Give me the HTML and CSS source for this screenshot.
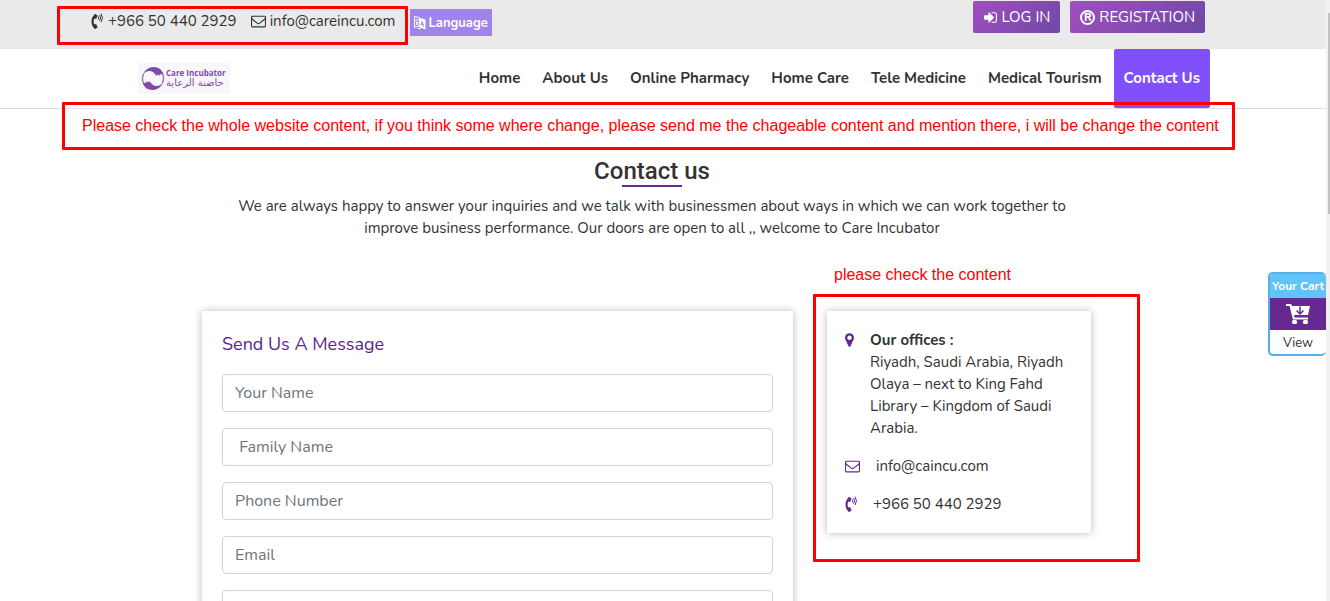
FILE: index.html
```html
<!DOCTYPE html>
<html lang="en">
<head>
<meta charset="utf-8">
<title>Contact us - Care Incubator</title>
<link rel="stylesheet" href="styles.css">
</head>
<body>
<svg class="defs" aria-hidden="true">
  <symbol id="phone" viewBox="0 0 384 512"><path fill="currentColor" d="M97.333 506.966c-129.874-129.874-129.681-340.252 0-469.933 5.698-5.698 14.527-6.632 21.263-2.422l64.817 40.513a17.187 17.187 0 0 1 6.849 20.958l-32.408 81.021a17.188 17.188 0 0 1-17.669 10.719l-55.81-5.58c-21.051 58.261-20.612 122.471 0 179.515l55.811-5.581a17.188 17.188 0 0 1 17.669 10.719l32.408 81.022a17.188 17.188 0 0 1-6.849 20.958l-64.817 40.513a17.190 17.190 0 0 1-21.264-2.422z"/><path fill="none" stroke="currentColor" stroke-width="32" stroke-linecap="round" d="M225 120q18 28 0 70M268 76q54 80 0 158M312 32q86 122 0 246"/></symbol>
  <symbol id="mail" viewBox="0 0 1792 1792"><path fill="currentColor" d="M1664 1504v-768q-32 36-69 66-268 206-426 338-51 43-83 67t-86.500 48.500-102.500 24.500h-2q-48 0-102.500-24.500t-86.500-48.500-83-67q-158-132-426-338-37-30-69-66v768q0 13 9.500 22.500t22.500 9.500h1472q13 0 22.500-9.500t9.500-22.500zm0-1051v-24.500l-.5-13-3-12.500-5.500-9-9-7.500-14-2.500h-1472q-13 0-22.500 9.500t-9.500 22.500q0 168 147 284 193 152 401 317 6 5 35 29.500t46 37.500 44.500 31.500 50.500 27.500 43 9h2q20 0 43-9t50.500-27.500 44.500-31.500 46-37.500 35-29.500q208-165 401-317 54-43 100.500-115.500t46.500-131.500zm128-37v1088q0 66-47 113t-113 47h-1472q-66 0-113-47t-47-113v-1088q0-66 47-113t113-47h1472q66 0 113 47t47 113z"/></symbol>
</svg>
<div class="page">
  <div class="topbar">
    <div class="contacts">
      <a href="tel:+966504402929"><svg class="icon-phone"><use href="#phone"/></svg>+966 50 440 2929</a>
      <a href="mailto:info@careincu.com"><svg class="icon-mail"><use href="#mail"/></svg>info@careincu.com</a>
    </div>
    <button class="language" type="button"><svg class="icon-lang" viewBox="0 0 12 14"><path fill="none" stroke="currentColor" d="M5 3.500L.5 4.500v7L5 10M5 1.500L.5.500V4M7 12.500H3.500M2 6.500h2.500M3.200 5.500v1q0 2-1.500 2.800M2.500 7.500l2 1.500"/><path fill="currentColor" d="M5 1.500l6.500 2v10L5 11z"/><path fill="none" stroke="#9f84ec" d="M6.700 9.500L8.200 5.500l1.500 5M7.200 8.500l2 .5"/></svg>Language</button>
    <div class="account">
      <button class="btn" type="button"><svg class="icon-btn" viewBox="0 0 1792 1792"><path fill="currentColor" d="M1312 896q0 26-19 45l-544 544q-19 19-45 19t-45-19-19-45v-288h-448q-26 0-45-19t-19-45v-384q0-26 19-45t45-19h448v-288q0-26 19-45t45-19 45 19l544 544q19 19 19 45zm352-352v704q0 119-84.500 203.500t-203.500 84.500h-320q-13 0-22.500-9.500t-9.500-22.500q0-4-1-20t-.5-26.500 3-23.500 10-19.500 20.500-6.500h320q66 0 113-47t47-113v-704q0-66-47-113t-113-47h-312l-11.500-1-11.500-3-8-5.500-7-9-2-13.500q0-4-1-20t-.5-26.500 3-23.500 10-19.500 20.500-6.500h320q119 0 203.500 84.500t84.500 203.500z"/></svg>LOG IN</button>
      <button class="btn" type="button"><span class="reg">R</span>REGISTATION</button>
    </div>
  </div>
  <header class="header">
    <a class="logo" href="#">
      <svg class="logo-mark" viewBox="0 0 26 28"><path fill="none" stroke="#9a74be" stroke-width="1.500" d="M3 9q-4 8 3 14M23 19q4-8-3-14"/><g fill="#7f4bab"><path d="M2 10C5 2 14-1 21 4l3 4c-1 1-2 2-4 1l1 2-3-1-1 1-4-4c-4-2-8-1-11 3z"/><path d="M24 18C21 26 12 29 5 24l-3-4c1-1 2-2 4-1l-1-2 3 1 1-1 4 4c4 2 8 1 11-3z"/></g></svg>
      <span class="logo-text"><span class="logo-en">Care Incubator</span><span class="logo-ar" lang="ar" dir="rtl">حاضنة الرعاية</span></span>
    </a>
    <nav class="nav">
      <a href="#">Home</a><a href="#">About Us</a><a href="#">Online Pharmacy</a><a href="#">Home Care</a><a href="#">Tele Medicine</a><a href="#">Medical Tourism</a><a class="active" href="#">Contact Us</a>
    </nav>
  </header>
  <main class="main">
    <section class="intro">
      <h1>Contact us</h1>
      <p>We are always happy to answer your inquiries and we talk with businessmen about ways in which we can work together to improve business performance. Our doors are open to all ,, welcome to Care Incubator</p>
    </section>
    <div class="columns">
      <form class="card form">
        <h2>Send Us A Message</h2>
        <input type="text" aria-label="Your Name" placeholder="Your Name">
        <input type="text" aria-label="Family Name" placeholder="&nbsp;Family Name">
        <input type="tel" aria-label="Phone Number" placeholder="Phone Number">
        <input type="email" aria-label="Email" placeholder="Email">
        <input type="text" aria-label="Subject">
      </form>
      <aside class="card info">
        <div class="row"><svg class="icon-pin" viewBox="0 0 1024 1792"><path fill="currentColor" d="M768 640q0-106-75-181t-181-75-181 75-75 181 75 181 181 75 181-75 75-181zm256 0q0 109-33 179l-364 774q-16 33-47.500 52t-67.500 19-67.500-19-46.500-52l-365-774q-33-70-33-179 0-212 150-362t362-150 362 150 150 362z"/></svg><address><b>Our offices :</b><br>Riyadh, Saudi Arabia, Riyadh Olaya – next to King Fahd Library – Kingdom of Saudi Arabia.</address></div>
        <div class="row mail"><svg class="icon-mail"><use href="#mail"/></svg><a href="mailto:info@caincu.com">info@caincu.com</a></div>
        <div class="row call"><svg class="icon-phone"><use href="#phone"/></svg><a href="tel:+966504402929">+966 50 440 2929</a></div>
      </aside>
    </div>
  </main>
</div>
<a class="cart" href="#">
  <span class="cart-title">Your Cart</span>
  <span class="cart-icon"><svg viewBox="0 0 24 21"><path fill="#fff" d="M0 0h5l1 2h18l-2 9H8l.5 2.500H22v2H7L3.500 2H0z"/><rect x="6" y="16" width="5" height="4" rx="1.500" fill="#fff"/><rect x="17" y="16" width="5" height="4" rx="1.500" fill="#fff"/><path fill="none" stroke="#652991" stroke-width="1.500" d="M14 2.500v7M10.500 6.500L14 10l3.500-3.500"/></svg></span>
  <span class="cart-view">View</span>
</a>
<div class="scroll"><div class="thumb"></div></div>
<div class="mark mark-contacts"></div>
<div class="mark mark-note">Please check the whole website content, if you think some where change, please send me the chageable content and mention there, i will be change the content</div>
<div class="note">please check the content</div>
<div class="mark mark-info"></div>
</body>
</html>
```
FILE: styles.css
```css
* { box-sizing: border-box; }
body {
  margin: 0;
  height: 100vh;
  overflow: hidden;
  position: relative;
  background: #fff;
  color: #333;
  font: 15px/22px Nunito, "Open Sans", sans-serif;
}
a { color: inherit; text-decoration: none; }
button { border: 0; color: #fff; font: inherit; cursor: pointer; }
svg { flex: none; }
.defs { position: absolute; width: 0; height: 0; }
.page { padding-right: 4px; }

.topbar {
  display: flex;
  align-items: flex-start;
  height: 49px;
  padding: 0 121px 0 91px;
  background: #eaeaea;
}
.contacts { display: flex; gap: 14px; padding-top: 10px; }
.contacts a { display: flex; align-items: center; gap: 4px; }
.icon-phone { width: 13px; height: 16px; }
.icon-mail { width: 15px; height: 16px; }
.language {
  display: flex;
  align-items: center;
  gap: 2px;
  height: 27px;
  margin: 9px 0 0 15px;
  padding: 0 4px;
  background: #9f84ec;
  font-size: 13px;
  font-weight: 700;
}
.icon-lang { width: 12px; height: 14px; }
.account { display: flex; gap: 10px; margin-left: auto; padding-top: 1px; }
.btn {
  display: flex;
  align-items: center;
  gap: 4px;
  height: 32px;
  padding: 0 10px;
  border-radius: 2px;
  background: linear-gradient(135deg, #a04fbd, #6f48a7);
}
.icon-btn { width: 15px; height: 15px; }
.reg {
  width: 15px;
  height: 15px;
  border: 2px solid #fff;
  border-radius: 50%;
  font-size: 11px;
  font-weight: 800;
  line-height: 11px;
}

.header {
  display: flex;
  justify-content: space-between;
  height: 60px;
  padding: 0 116px 0 138px;
  border-bottom: 1px solid #ddd;
}
.logo {
  display: flex;
  align-self: center;
  align-items: center;
  gap: 1px;
  width: 92px;
  height: 31px;
  padding-left: 3px;
  background: #f7f7f8;
  color: #7f4bab;
}
.logo-mark { width: 24px; height: 27px; }
.logo-text { display: flex; flex-direction: column; white-space: nowrap; }
.logo-en { font: bold 8px/9px "Open Sans", sans-serif; }
.logo-ar { font: 10px/12px "DejaVu Sans", sans-serif; text-align: left; }
.nav { display: flex; gap: 2px; font-weight: 700; }
.nav a { padding: 18px 10px; }
.nav .active { padding: 18px 10px; background: #8150fb; color: #fff; border-radius: 2px; }

.main { padding-right: 22px; }
.intro { max-width: 900px; margin: 0 auto; padding: 48px 20px 0; text-align: center; }
h1 {
  margin: 0 0 8px;
  font: 500 24px/28px Roboto, sans-serif;
}
h1::after {
  content: "";
  display: block;
  width: 60px;
  height: 2px;
  margin: 0 auto;
  background: #652991;
}
.intro p { margin: 0; }
.columns {
  display: grid;
  grid-template-columns: 591fr 264fr;
  gap: 34px;
  align-items: start;
  max-width: 900px;
  margin: 72px auto 0;
  padding-right: 11px;
}
.card { background: #fff; box-shadow: 0 0 8px rgba(0, 0, 0, .27); }
.form { display: flex; flex-direction: column; gap: 16px; padding: 20px; }
h2 { margin: 0 0 1px; color: #5b2391; font-size: 18px; font-weight: 400; line-height: 26px; }
.form input {
  width: 100%;
  height: 38px;
  padding: 6px 12px;
  border: 1px solid #ced4da;
  border-radius: 4px;
  color: #495057;
  font: inherit;
  font-size: 16px;
}
.form input::placeholder { color: #6c757d; opacity: 1; }
.info { display: flex; flex-direction: column; gap: 16px; padding: 18px; }
.row { display: grid; grid-template-columns: 15px 1fr; column-gap: 10px; align-items: start; }
.row.mail { column-gap: 16px; }
.row.call { column-gap: 13px; }
.row svg { margin-top: 3px; color: #652991; }
.row address { font-style: normal; }
.icon-pin { width: 9px; height: 16px; }

.cart {
  position: absolute;
  top: 272px;
  right: 4px;
  width: 58px;
  border: 2px solid #55afe8;
  border-right: 0;
  border-radius: 5px;
  background: #fff;
  font-size: 13px;
  text-align: center;
  overflow: hidden;
}
.cart span { display: block; }
.cart-title { height: 24px; background: #60c4f8; color: #fff; font-size: 12px; font-weight: 700; line-height: 24px; white-space: nowrap; }
.cart .cart-icon { display: flex; align-items: center; justify-content: center; height: 32px; background: #652991; }
.cart-icon svg { width: 24px; height: 21px; }
.cart-view { height: 24px; line-height: 26px; }
.scroll { position: absolute; top: 0; right: 0; bottom: 0; width: 4px; padding: 13px 0 0 2px; background: #f1f1f1; }
.thumb { height: 201px; background: #c1c1c1; }

.mark { position: absolute; border: 3px solid #f00; border-radius: 1px; pointer-events: none; }
.mark-contacts { left: 57px; top: 6px; width: 351px; height: 39px; }
.mark-note {
  left: 62px;
  top: 102px;
  width: 1173px;
  height: 48px;
  padding-left: 17px;
  color: #f00;
  font: 16px/41px "Liberation Sans", sans-serif;
  white-space: nowrap;
}
.note { position: absolute; left: 834px; top: 265px; color: #f00; font: 16px/20px "Liberation Sans", sans-serif; }
.mark-info { left: 813px; top: 294px; width: 327px; height: 268px; }
```
